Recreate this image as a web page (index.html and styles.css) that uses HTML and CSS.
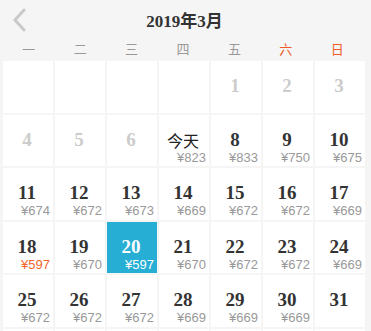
FILE: index.html
```html
<!DOCTYPE html>
<html lang="zh-CN">
<head>
<meta charset="utf-8">
<title>2019年3月</title>
<link rel="stylesheet" href="styles.css">
</head>
<body>
<div class="top">
  <div class="back">
    <svg width="16" height="24" viewBox="0 0 16 24"><polyline points="12,2 3,12 12,22" fill="none" stroke="#c9c9c9" stroke-width="3" stroke-linecap="round" stroke-linejoin="round"/></svg>
  </div>
  <div class="title"><span class="num">2019</span>年<span class="num">3</span>月</div>
  <div></div>
</div>
<div class="week">
  <span>一</span><span>二</span><span>三</span><span>四</span><span>五</span><span class="wk">六</span><span class="wk">日</span>
</div>
<div class="grid">
  <div class="cell"></div>
  <div class="cell"></div>
  <div class="cell"></div>
  <div class="cell"></div>
  <div class="cell off"><div class="d">1</div><div class="p"></div></div>
  <div class="cell off"><div class="d">2</div><div class="p"></div></div>
  <div class="cell off"><div class="d">3</div><div class="p"></div></div>

  <div class="cell off"><div class="d">4</div><div class="p"></div></div>
  <div class="cell off"><div class="d">5</div><div class="p"></div></div>
  <div class="cell off"><div class="d">6</div><div class="p"></div></div>
  <div class="cell"><div class="d today">今天</div><div class="p">¥823</div></div>
  <div class="cell"><div class="d">8</div><div class="p">¥833</div></div>
  <div class="cell"><div class="d">9</div><div class="p">¥750</div></div>
  <div class="cell"><div class="d">10</div><div class="p">¥675</div></div>

  <div class="cell"><div class="d">11</div><div class="p">¥674</div></div>
  <div class="cell"><div class="d">12</div><div class="p">¥672</div></div>
  <div class="cell"><div class="d">13</div><div class="p">¥673</div></div>
  <div class="cell"><div class="d">14</div><div class="p">¥669</div></div>
  <div class="cell"><div class="d">15</div><div class="p">¥672</div></div>
  <div class="cell"><div class="d">16</div><div class="p">¥672</div></div>
  <div class="cell"><div class="d">17</div><div class="p">¥669</div></div>

  <div class="cell"><div class="d">18</div><div class="p low">¥597</div></div>
  <div class="cell"><div class="d">19</div><div class="p">¥670</div></div>
  <div class="cell sel"><div class="d">20</div><div class="p">¥597</div></div>
  <div class="cell"><div class="d">21</div><div class="p">¥670</div></div>
  <div class="cell"><div class="d">22</div><div class="p">¥672</div></div>
  <div class="cell"><div class="d">23</div><div class="p">¥672</div></div>
  <div class="cell"><div class="d">24</div><div class="p">¥669</div></div>

  <div class="cell"><div class="d">25</div><div class="p">¥672</div></div>
  <div class="cell"><div class="d">26</div><div class="p">¥672</div></div>
  <div class="cell"><div class="d">27</div><div class="p">¥672</div></div>
  <div class="cell"><div class="d">28</div><div class="p">¥669</div></div>
  <div class="cell"><div class="d">29</div><div class="p">¥669</div></div>
  <div class="cell"><div class="d">30</div><div class="p">¥669</div></div>
  <div class="cell"><div class="d">31</div><div class="p"></div></div>

  <div class="cell"></div>
  <div class="cell"></div>
  <div class="cell"></div>
  <div class="cell"></div>
  <div class="cell"></div>
  <div class="cell"></div>
  <div class="cell"></div>
</div>
</body>
</html>
```

FILE: styles.css
```css
html, body {
  margin: 0;
  padding: 0;
  background: #f5f5f5;
  font-family: "Liberation Sans", "Noto Sans CJK SC", sans-serif;
  overflow: hidden;
}

.top {
  height: 38px;
  display: grid;
  grid-template-columns: 40px 1fr 40px;
  align-items: center;
}

.back {
  display: flex;
  padding-left: 12px;
  padding-top: 1px;
}

.title {
  text-align: center;
  font-size: 17px;
  font-weight: bold;
  color: #333;
  font-family: "Liberation Serif", "Noto Sans CJK SC", serif;
  padding-right: 2px;
}

.title .num {
  font-family: "Liberation Serif", serif;
}

.week {
  margin-left: 3px;
  width: 360px;
  height: 21px;
  display: grid;
  grid-template-columns: repeat(7, 1fr);
  text-align: center;
  font-size: 13px;
  line-height: 22px;
  color: #999;
  font-family: "Noto Sans CJK SC", sans-serif;
}

.week .wk {
  color: #ef5a2a;
}

.grid {
  margin-top: 2px;
  margin-left: 3px;
  display: grid;
  grid-template-columns: repeat(7, 50px);
  grid-auto-rows: 51.5px;
  column-gap: 2px;
  row-gap: 2px;
}

.cell {
  background: #fff;
  box-sizing: border-box;
  padding-top: 15px;
}

.d {
  font-family: "Liberation Serif", serif;
  font-weight: bold;
  font-size: 19px;
  line-height: 20px;
  height: 20px;
  text-align: center;
  padding-right: 2px;
  color: #333;
}

.d.today {
  font-family: "Noto Sans CJK SC", sans-serif;
  font-weight: normal;
  font-size: 16px;
  color: #222;
}

.p {
  font-size: 13px;
  line-height: 15px;
  height: 15px;
  text-align: right;
  padding-right: 3px;
  color: #999;
}

.p.low {
  color: #f0662c;
}

.off .d {
  color: #ccc;
}

.sel {
  background: #27aed5;
}

.sel .d, .sel .p {
  color: #fff;
}
```
